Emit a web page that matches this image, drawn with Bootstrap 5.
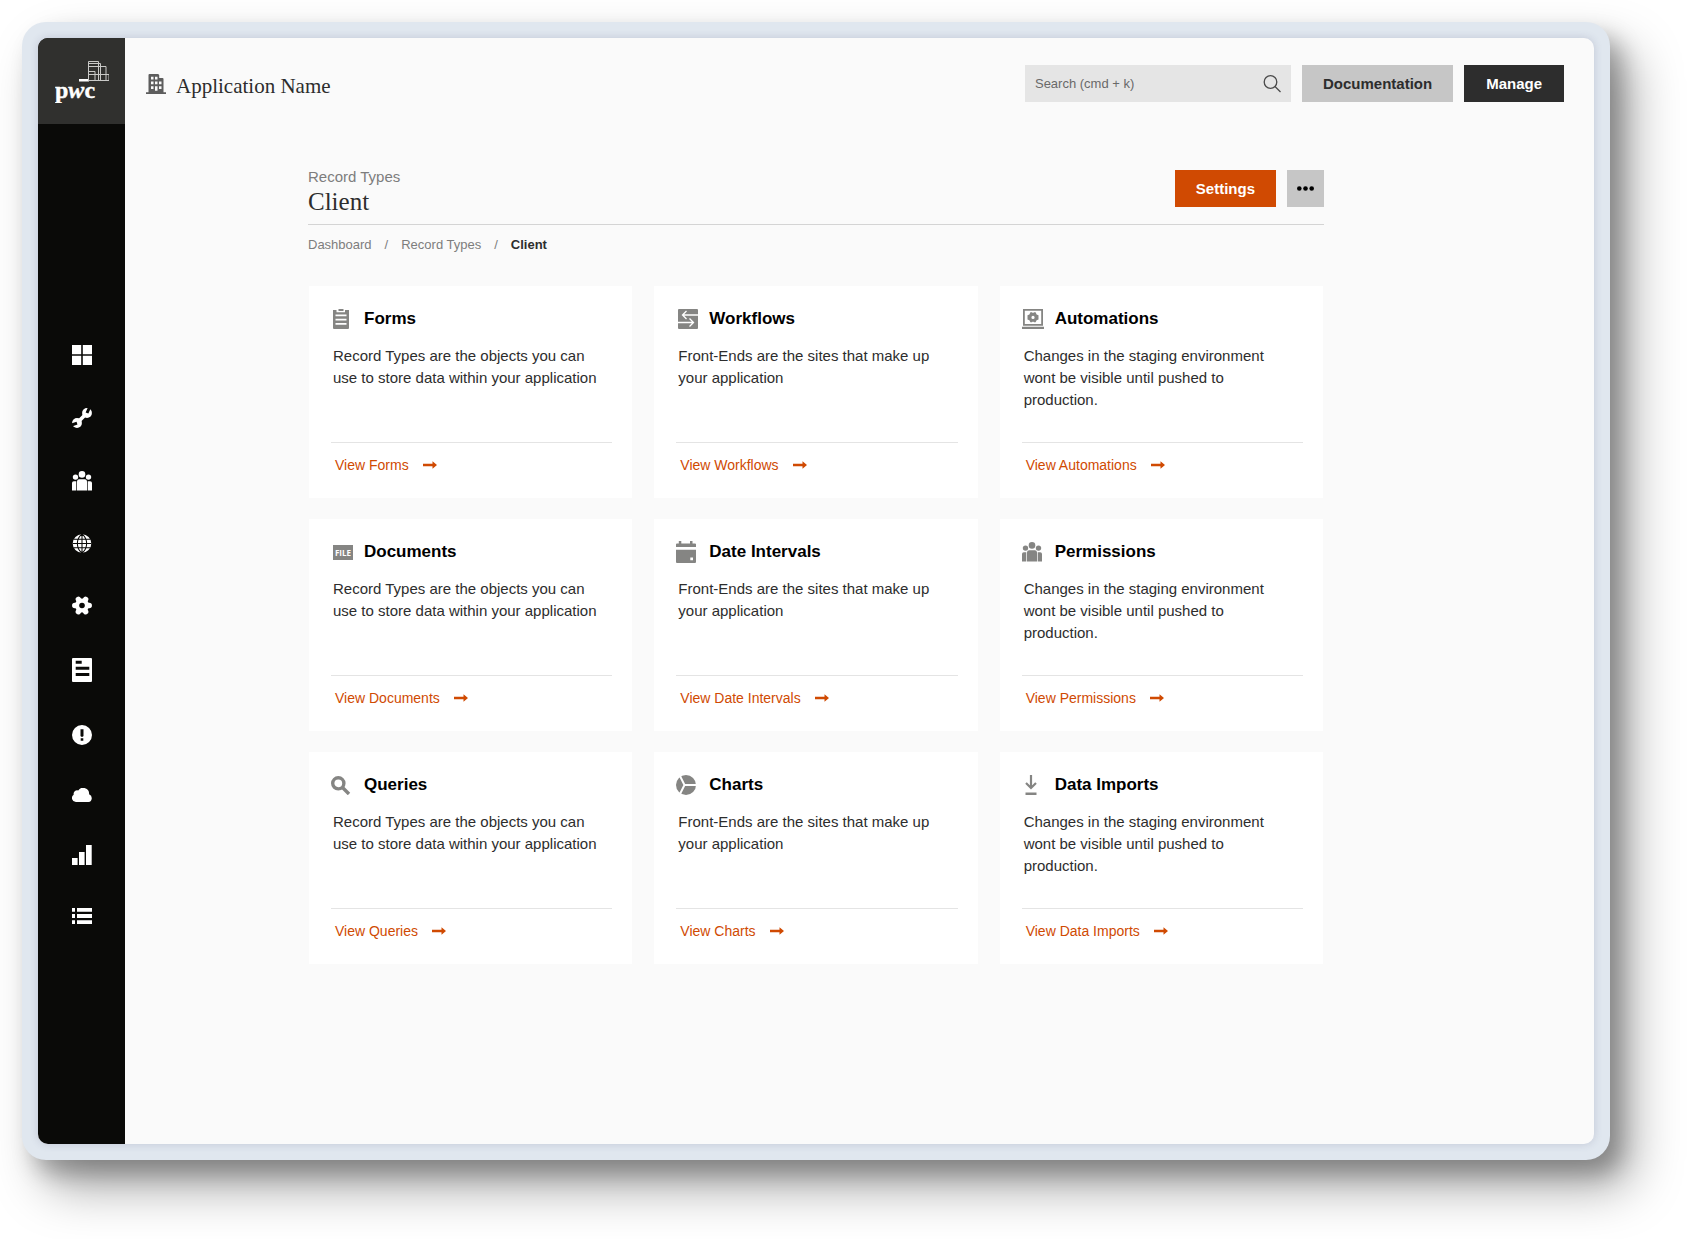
<!DOCTYPE html>
<html lang="en">
<head>
<meta charset="utf-8">
<meta name="viewport" content="width=device-width, initial-scale=1">
<title>Application Name – Client</title>
<link href="https://cdn.jsdelivr.net/npm/bootstrap@5.3.0/dist/css/bootstrap.min.css" rel="stylesheet">
<style>
  :root { --accent: #d04a02; --ink: #2d2d2d; --quiet: #7d7d7d; --glyph: #858583; }
  body { font-family: "Liberation Sans", Arial, sans-serif; font-size: 15px; line-height: 22px; color: var(--ink); background: #fff; padding: 22px 78px 79px 22px; }
  svg { display: block; fill: currentColor; }
  .device { background: #e0e7ef; border-radius: 24px; padding: 16px; box-shadow: 12px 14px 22px rgba(0,0,0,.26), 22px 28px 50px rgba(0,0,0,.34); }
  .screen { background: #fafafa; border-radius: 10px; box-shadow: 0 0 8px rgba(70,70,110,.2); }
  .rail { width: 87px; background: #0a0a08; color: #fff; border-radius: 10px 0 0 10px; }
  .rail-logo { height: 86px; background: #30302e; color: #fff; }
  .rail-nav { gap: 43px; }
  .rail-nav a { color: #fff; }
  .serif { font-family: "Liberation Serif", "Times New Roman", serif; font-weight: 400; color: var(--ink); }
  .topbar { padding: 27px 30px 0 21px; }
  .app-brand { gap: 10px; }
  .app-name { font-size: 21px; line-height: 28px; }
  .app-icon { color: #5d5d5d; }
  .btn-flat { --bs-btn-border-radius: 0; --bs-btn-border-width: 0; --bs-btn-font-size: 15px; --bs-btn-font-weight: 700; --bs-btn-line-height: 21px; --bs-btn-padding-y: 8px; --bs-btn-padding-x: 21px; }
  .btn-grey { --bs-btn-bg: #c6c6c6; --bs-btn-color: #2d2d2d; --bs-btn-hover-bg: #b8b8b8; }
  .btn-ink { --bs-btn-bg: #2d2d2d; --bs-btn-color: #fff; --bs-btn-hover-bg: #000; --bs-btn-hover-color: #fff; --bs-btn-padding-x: 22px; }
  .btn-accent { --bs-btn-bg: #d04a02; --bs-btn-color: #fff; --bs-btn-hover-bg: #b03e00; --bs-btn-hover-color: #fff; }
  .btn-dots { --bs-btn-padding-x: 10px; color: #000; }
  .bar-gap { gap: 11px; }
  .search-box { width: 266px; height: 37px; background: #e5e5e5; padding: 0 10px; }
  .search-box input { font-size: 13px; color: var(--ink); min-width: 0; }
  .search-box input::placeholder { color: #696969; opacity: 1; }
  .search-box button { color: #4a4a4a; }
  .page { padding: 64px 270px 40px 183px; }
  .page-head { border-bottom: 1px solid #d4d4d4; padding-bottom: 8px; }
  .kicker { color: var(--quiet); }
  .page-title { font-size: 25px; line-height: 28px; }
  .trail { --bs-breadcrumb-item-padding-x: 13px; --bs-breadcrumb-divider-color: #7d7d7d; --bs-breadcrumb-item-active-color: #2d2d2d; font-size: 13px; line-height: 20px; margin: 10px 0 31px; }
  .trail a { color: var(--quiet); }
  .tiles-wrap { padding: 0 1px; }
  .tiles { --bs-gutter-x: 22px; --bs-gutter-y: 21px; }
  .tile { min-height: 212px; background: #fff; padding: 21px 20px 22px 22px; }
  .tile-icon { width: 33px; color: var(--glyph); }
  .tile-title { font-size: 17px; line-height: 24px; font-weight: 700; color: #000; }
  .tile-text { margin: 14px 0 0; padding: 0 10px 0 2px; }
  .tile-foot { border-top: 1px solid #e4e4e4; padding: 11px 0 0 4px; }
  .tile-foot a { color: var(--accent); font-size: 14px; gap: 14px; }
</style>
<script src="https://cdn.jsdelivr.net/npm/bootstrap@5.3.0/dist/js/bootstrap.bundle.min.js"></script>
</head>
<body class="d-flex flex-column min-vh-100">

<!-- shared icon shapes -->
<svg class="d-none" aria-hidden="true">
  <symbol id="i-people" viewBox="0 0 20 20"><circle cx="10" cy="3.4" r="3.3"/><circle cx="3.5" cy="6.1" r="2.7"/><circle cx="16.5" cy="6.1" r="2.7"/><path d="M5 19.600v-9.200q0-2.200 2.200-2.200h5.600q2.200 0 2.200 2.200v9.200zM0 19.600v-7.600q0-1.800 1.800-1.800h2.500v9.400zM20 19.600v-7.600q0-1.800-1.800-1.800h-2.500v9.400z"/></symbol>
  <symbol id="i-arrow" viewBox="0 0 14 8"><path d="M0 2.800h9.500V.3L14 4 9.500 7.700V5.200H0z"/></symbol>
</svg>

<div class="device d-flex flex-grow-1">
  <div class="screen d-flex flex-grow-1">
    <aside class="rail d-flex flex-column flex-shrink-0 overflow-hidden">
      <a href="#" class="rail-logo d-flex align-items-center justify-content-center text-decoration-none" aria-label="pwc">
        <svg width="54" height="44" viewBox="0 0 54 44">
          <text x="0" y="39" font-family="Liberation Serif, serif" font-weight="700" font-size="24" stroke="currentColor" stroke-width=".4">p<tspan font-style="italic">w</tspan>c</text>
          <path d="M24 20h10v2.600H24z"/>
          <g fill="none" stroke="#c9c9c7" stroke-width="1"><path d="M33.500 21.500v-19h10v19zM33.500 4.500h12v17M33.500 7.500h17.500v14M33.500 15.500h20.500v6M33.500 12.500h6.500v9M33.500 21.500h20.500"/></g>
        </svg>
      </a>
      <nav class="rail-nav d-flex flex-column flex-grow-1 align-items-center justify-content-center" aria-label="Main">
        <a href="#" aria-label="Dashboard"><svg width="20" height="20"><path d="M0 0h9.200v9.200H0zM10.800 0H20v9.200h-9.200zM0 10.800h9.200V20H0zM10.800 10.800H20V20h-9.200z"/></svg></a>
        <a href="#" aria-label="Tools"><svg width="20" height="20" viewBox="0 0 20 20"><circle cx="15" cy="5" r="4.900"/><circle cx="5" cy="15" r="4.900"/><path fill="none" stroke="currentColor" stroke-width="3.800" d="M5 15 15 5"/><path fill="none" stroke="#0a0a08" stroke-width="3" d="M15 5l2.500-5.500M5 15.200l-6 2"/></svg></a>
        <a href="#" aria-label="People"><svg width="20" height="20"><use href="#i-people"/></svg></a>
        <a href="#" aria-label="Sites"><svg width="20" height="19" viewBox="0 0 20 20"><circle cx="10" cy="10" r="9.800"/><path fill="none" stroke="#0a0a08" stroke-width="1.100" d="M0 10h20M1 5.500h18M1 14.500h18M10 0v20M10 0C3.500 5 3.500 15 10 20M10 0c6.500 5 6.500 15 0 20"/></svg></a>
        <a href="#" aria-label="Settings"><svg width="20" height="19" viewBox="0 0 20 19"><g stroke="currentColor" stroke-width="5.500" stroke-linecap="round"><path d="M2.800 9.500h14.400M6.400 3.300l7.200 12.400M13.600 3.300 6.400 15.700"/></g><circle cx="10" cy="9.500" r="7"/><circle cx="10" cy="9.500" r="2.800" fill="#0a0a08"/></svg></a>
        <a href="#" aria-label="Records"><svg width="20" height="24" viewBox="0 0 20 24"><path fill-rule="evenodd" d="M1 0h18q1 0 1 1v22q0 1-1 1H1q-1 0-1-1V1q0-1 1-1zM3.700 2.700v3h6v-3zM3.700 8.800v3h13.600v-3zM3.700 15v3h13.600v-3z"/></svg></a>
        <a href="#" aria-label="Alerts"><svg width="20" height="20" viewBox="0 0 20 20"><path fill-rule="evenodd" d="M10 0a10 10 0 1 0 0 20 10 10 0 0 0 0-20zM8.500 4.200h3V11l-.7.800H9.200L8.500 11zM8.700 13.300h2.600v2.500H8.700z"/></svg></a>
        <a href="#" aria-label="Cloud"><svg width="20" height="14" viewBox="0 0 20 14"><path d="M4 14a4 4 0 0 1-2.300-7.300A3.600 3.600 0 0 1 6.200 2.400a6 6 0 0 1 10.900 3.900A4 4 0 0 1 16.500 14z"/></svg></a>
        <a href="#" aria-label="Charts"><svg width="20" height="20"><path d="M0 13h5.600v7H0zM7 7h5.600v13H7zM14 0h5.700v20H14z"/></svg></a>
        <a href="#" aria-label="Lists"><svg width="20" height="16"><path d="M0 0h3v3.800H0zM5 0h15v3.800H5zM0 6.100h3v3.800H0zM5 6.100h15v3.800H5zM0 12.200h3V16H0zM5 12.200h15V16H5z"/></svg></a>
      </nav>
    </aside>

    <div class="flex-grow-1">
      <header class="topbar d-flex flex-wrap align-items-center justify-content-between">
        <div class="app-brand d-flex align-items-center">
          <svg class="app-icon" width="20" height="20" viewBox="0 0 20 20"><path fill-rule="evenodd" d="M0 20v-1.800h2.500V1q0-1 1-1h8.700l1 1v3h3.300q1 0 1 1v13.200H20V20zM5 2.800v2.700h2.500V2.800zM9 2.800v2.700h2.500V2.800zM5 7.500v2.700h2.500V7.500zM9 7.500v2.700h2.500V7.500zM13 7.500v2.700h2.500V7.500zM5 12.200v2.700h2.500v-2.700zM9 12.200v4.500h2.500v-4.500zM13 12.200v2.700h2.500v-2.700z"/></svg>
          <span class="app-name serif pt-1">Application Name</span>
        </div>
        <div class="d-flex bar-gap">
          <form class="search-box d-flex align-items-center" role="search">
            <input type="search" class="flex-grow-1 border-0 bg-transparent p-0" placeholder="Search (cmd + k)" aria-label="Search">
            <button type="button" class="border-0 bg-transparent p-0" aria-label="Search"><svg width="18" height="18" viewBox="0 0 18 18"><g fill="none" stroke="currentColor" stroke-width="1.300"><circle cx="7.500" cy="7" r="6.300"/><path d="M12 11.500l5.500 5.500"/></g></svg></button>
          </form>
          <button type="button" class="btn btn-flat btn-grey">Documentation</button>
          <button type="button" class="btn btn-flat btn-ink">Manage</button>
        </div>
      </header>

      <main class="page">
        <div class="page-head d-flex justify-content-between align-items-start">
          <div>
            <div class="kicker">Record Types</div>
            <h1 class="page-title serif mb-0">Client</h1>
          </div>
          <div class="d-flex bar-gap pt-1">
            <button type="button" class="btn btn-flat btn-accent">Settings</button>
            <button type="button" class="btn btn-flat btn-grey btn-dots" aria-label="More"><svg width="17" height="5"><circle cx="2.300" cy="2.500" r="2.300"/><circle cx="8.500" cy="2.500" r="2.300"/><circle cx="14.700" cy="2.500" r="2.300"/></svg></button>
          </div>
        </div>
        <nav aria-label="Breadcrumb">
          <ol class="breadcrumb trail">
            <li class="breadcrumb-item"><a href="#" class="text-decoration-none">Dashboard</a></li>
            <li class="breadcrumb-item"><a href="#" class="text-decoration-none">Record Types</a></li>
            <li class="breadcrumb-item active" aria-current="page"><strong>Client</strong></li>
          </ol>
        </nav>

        <div class="tiles-wrap">
          <div class="row row-cols-3 tiles">
            <div class="col"><section class="tile d-flex flex-column">
              <div class="d-flex align-items-center"><span class="tile-icon"><svg width="20" height="20" viewBox="0 0 20 20"><path fill-rule="evenodd" d="M2 1h3.500v2.200h8.500V1h4v18q0 1-1 1H3q-1 0-1-1zM4.500 5.500v1.800h11V5.500zM4.500 9.700v1.800h11V9.700zM4.500 13.900v1.800h11v-1.800zM7.500 0h5v2h-5z"/></svg></span><h2 class="tile-title mb-0">Forms</h2></div>
              <p class="tile-text">Record Types are the objects you can use to store data within your application</p>
              <div class="tile-foot mt-auto"><a href="#" class="d-inline-flex align-items-center text-decoration-none">View Forms <svg width="14" height="8"><use href="#i-arrow"/></svg></a></div>
            </section></div>
            <div class="col"><section class="tile d-flex flex-column">
              <div class="d-flex align-items-center"><span class="tile-icon"><svg width="22" height="20" viewBox="0 0 22 20"><rect x="2" width="20" height="20" rx="1"/><path fill="none" stroke="#fff" stroke-width="1.300" d="M22 6H6.500M10.500 2 6.500 6l4 4M2 13.500h15.500M13.500 9.500l4 4-4 4"/></svg></span><h2 class="tile-title mb-0">Workflows</h2></div>
              <p class="tile-text">Front-Ends are the sites that make up your application</p>
              <div class="tile-foot mt-auto"><a href="#" class="d-inline-flex align-items-center text-decoration-none">View Workflows <svg width="14" height="8"><use href="#i-arrow"/></svg></a></div>
            </section></div>
            <div class="col"><section class="tile d-flex flex-column">
              <div class="d-flex align-items-center"><span class="tile-icon"><svg width="22" height="20" viewBox="0 0 22 20"><path fill-rule="evenodd" d="M1 0h20v16.800H1zM2.800 1.800v13.200h16.400V1.800zM0 17.800h22v2.200H0z"/><path fill-rule="evenodd" d="M8.400 3.300h1.500l1.100.8 1.100-.8h1.500l1 2.100 1.900.8v4.200l-1.900.8-1 2.100h-1.500l-1.100-.8-1.100.8H8.400l-1-2.100-1.900-.8V6.200l1.900-.8zM11 6.800a1.600 1.600 0 1 0 0 3.200 1.600 1.600 0 0 0 0-3.200z"/></svg></span><h2 class="tile-title mb-0">Automations</h2></div>
              <p class="tile-text">Changes in the staging environment wont be visible until pushed to production.</p>
              <div class="tile-foot mt-auto"><a href="#" class="d-inline-flex align-items-center text-decoration-none">View Automations <svg width="14" height="8"><use href="#i-arrow"/></svg></a></div>
            </section></div>
            <div class="col"><section class="tile d-flex flex-column">
              <div class="d-flex align-items-center"><span class="tile-icon"><svg width="22" height="15" viewBox="0 0 22 15"><path d="M2 0h20v15H2z"/><text x="12" y="10.500" text-anchor="middle" font-family="Open Sans, sans-serif" font-weight="700" font-size="8" fill="#fff">FILE</text></svg></span><h2 class="tile-title mb-0">Documents</h2></div>
              <p class="tile-text">Record Types are the objects you can use to store data within your application</p>
              <div class="tile-foot mt-auto"><a href="#" class="d-inline-flex align-items-center text-decoration-none">View Documents <svg width="14" height="8"><use href="#i-arrow"/></svg></a></div>
            </section></div>
            <div class="col"><section class="tile d-flex flex-column">
              <div class="d-flex align-items-center"><span class="tile-icon"><svg width="20" height="22" viewBox="0 0 20 22"><path fill-rule="evenodd" d="M0 6V3.500q0-1 1-1h1.800V0h2.500v2.500h8.700V0h2.500v2.500H19q1 0 1 1V6zM0 8.800h20V21q0 1-1 1H1q-1 0-1-1zM14.300 16.500v2.700h2.700v-2.700z"/></svg></span><h2 class="tile-title mb-0">Date Intervals</h2></div>
              <p class="tile-text">Front-Ends are the sites that make up your application</p>
              <div class="tile-foot mt-auto"><a href="#" class="d-inline-flex align-items-center text-decoration-none">View Date Intervals <svg width="14" height="8"><use href="#i-arrow"/></svg></a></div>
            </section></div>
            <div class="col"><section class="tile d-flex flex-column">
              <div class="d-flex align-items-center"><span class="tile-icon"><svg width="20" height="20"><use href="#i-people"/></svg></span><h2 class="tile-title mb-0">Permissions</h2></div>
              <p class="tile-text">Changes in the staging environment wont be visible until pushed to production.</p>
              <div class="tile-foot mt-auto"><a href="#" class="d-inline-flex align-items-center text-decoration-none">View Permissions <svg width="14" height="8"><use href="#i-arrow"/></svg></a></div>
            </section></div>
            <div class="col"><section class="tile d-flex flex-column">
              <div class="d-flex align-items-center"><span class="tile-icon"><svg width="20" height="20" viewBox="0 0 20 20"><g fill="none" stroke="currentColor" stroke-width="3.400"><circle cx="7.300" cy="8.300" r="5.600"/><path d="M11.500 12.500l6.500 6.500"/></g></svg></span><h2 class="tile-title mb-0">Queries</h2></div>
              <p class="tile-text">Record Types are the objects you can use to store data within your application</p>
              <div class="tile-foot mt-auto"><a href="#" class="d-inline-flex align-items-center text-decoration-none">View Queries <svg width="14" height="8"><use href="#i-arrow"/></svg></a></div>
            </section></div>
            <div class="col"><section class="tile d-flex flex-column">
              <div class="d-flex align-items-center"><span class="tile-icon"><svg width="20" height="20" viewBox="0 0 20 20"><circle cx="10" cy="10" r="10"/><path fill="none" stroke="#fff" stroke-width="2" d="M20.500 10H8.500M3.500 0l5 10-5 10"/></svg></span><h2 class="tile-title mb-0">Charts</h2></div>
              <p class="tile-text">Front-Ends are the sites that make up your application</p>
              <div class="tile-foot mt-auto"><a href="#" class="d-inline-flex align-items-center text-decoration-none">View Charts <svg width="14" height="8"><use href="#i-arrow"/></svg></a></div>
            </section></div>
            <div class="col"><section class="tile d-flex flex-column">
              <div class="d-flex align-items-center"><span class="tile-icon"><svg width="18" height="20" viewBox="0 0 18 20"><path d="M3.500 17.500h11V20h-11z"/><path fill="none" stroke="currentColor" stroke-width="2.200" d="M9 0v13M4 8l5 5 5-5"/></svg></span><h2 class="tile-title mb-0">Data Imports</h2></div>
              <p class="tile-text">Changes in the staging environment wont be visible until pushed to production.</p>
              <div class="tile-foot mt-auto"><a href="#" class="d-inline-flex align-items-center text-decoration-none">View Data Imports <svg width="14" height="8"><use href="#i-arrow"/></svg></a></div>
            </section></div>
          </div>
        </div>
      </main>
    </div>
  </div>
</div>
</body>
</html>
